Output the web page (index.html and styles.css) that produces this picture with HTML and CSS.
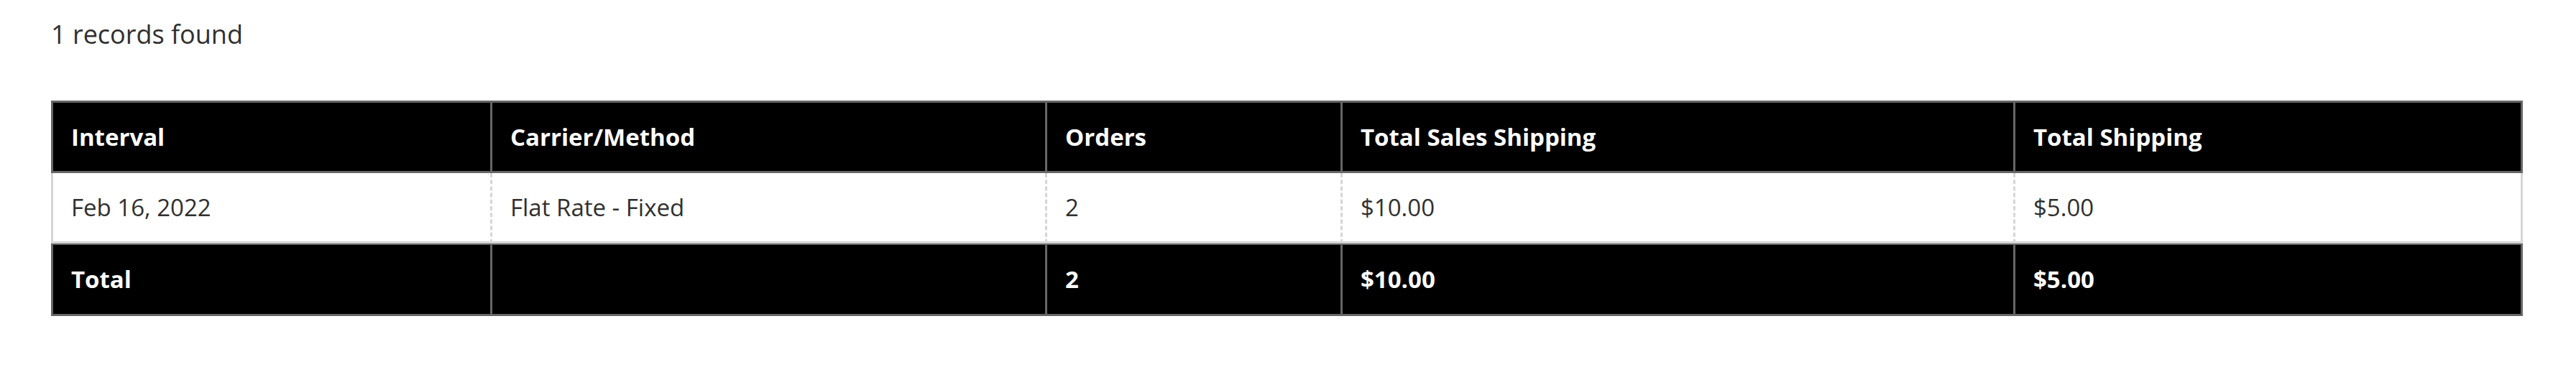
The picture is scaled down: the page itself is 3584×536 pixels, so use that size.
FILE: index.html
```html
<!DOCTYPE html>
<html lang="en">
<head>
<meta charset="utf-8">
<title>Shipping Report</title>
<link rel="stylesheet" href="styles.css">
</head>
<body>
<div class="page">
  <div class="records">1 records found</div>
  <table class="grid">
    <colgroup>
      <col class="c1"><col class="c2"><col class="c3"><col class="c4"><col class="c5">
    </colgroup>
    <thead>
      <tr>
        <th>Interval</th>
        <th>Carrier/Method</th>
        <th>Orders</th>
        <th>Total Sales Shipping</th>
        <th>Total Shipping</th>
      </tr>
    </thead>
    <tbody>
      <tr>
        <td>Feb 16, 2022</td>
        <td>Flat Rate - Fixed</td>
        <td>2</td>
        <td>$10.00</td>
        <td>$5.00</td>
      </tr>
    </tbody>
    <tfoot>
      <tr>
        <th>Total</th>
        <th></th>
        <th>2</th>
        <th>$10.00</th>
        <th>$5.00</th>
      </tr>
    </tfoot>
  </table>
</div>
</body>
</html>
```

FILE: styles.css
```css
html, body {
  margin: 0;
  padding: 0;
  background: #ffffff;
}

.page {
  padding: 26px 74px 0 71px;
  font-family: "Open Sans", "Noto Sans", "Liberation Sans", sans-serif;
  color: #303030;
}

.records {
  font-size: 36px;
  line-height: 44px;
  margin-bottom: 70px;
}

.grid {
  width: 3439px;
  table-layout: fixed;
  border-collapse: separate;
  border-spacing: 0;
  font-size: 33px;
}

.c1 { width: 611px; }
.c2 { width: 772px; }
.c3 { width: 411px; }
.c4 { width: 936px; }
.c5 { width: 709px; }

.grid th,
.grid td {
  box-sizing: border-box;
  text-align: left;
  vertical-align: middle;
  padding: 0 24px 0 25px;
  line-height: 44px;
  white-space: nowrap;
}

.grid thead th {
  height: 101px;
  background: #000000;
  color: #ffffff;
  font-weight: 700;
  border-top: 3px solid #666666;
  border-bottom: 3px solid #666666;
  border-left: 3px solid #666666;
}

.grid thead th:last-child,
.grid tfoot th:last-child {
  border-right: 3px solid #666666;
}

.grid tbody td {
  height: 98px;
  background: #ffffff;
  color: #303030;
  font-weight: 400;
  border-bottom: 3px solid #d6d6d6;
  border-left: 3px dashed #d6d6d6;
}

.grid tbody td:first-child {
  border-left-style: solid;
}

.grid tbody td:last-child {
  border-right: 3px solid #d6d6d6;
}

.grid tfoot th {
  height: 101px;
  background: #000000;
  color: #ffffff;
  font-weight: 700;
  border-top: 2px solid #666666;
  border-bottom: 3px solid #666666;
  border-left: 3px solid #666666;
}
```
